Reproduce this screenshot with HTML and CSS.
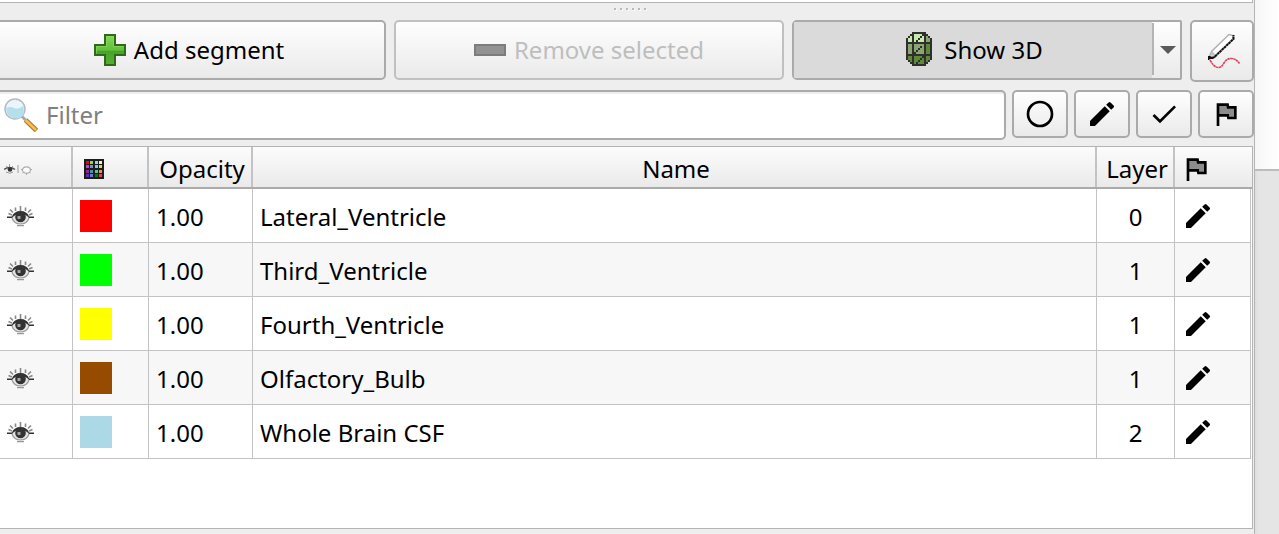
FILE: index.html
```html
<!DOCTYPE html>
<html lang="en">
<head>
    <meta charset="UTF-8" />
    <meta name="viewport" content="width=device-width, initial-scale=1.0"/>
    <title>Segment Editor</title>
    <link rel="stylesheet" href="styles.css">
</head>
<body>

    <!-- Shared icons -->
    <svg class="sprite">
        <symbol id="pencil" viewBox="0 0 24 24">
            <path d="M3 17.25V21h3.75L17.81 9.94l-3.75-3.75L3 17.25zM20.71 7.04a1 1 0 0 0 0-1.41l-2.34-2.34a1 1 0 0 0-1.41 0l-1.83 1.83 3.75 3.75 1.83-1.83z"/>
        </symbol>
        <symbol id="flag" viewBox="0 0 24 24">
            <path fill="#8c8c8c" d="M6 5h7.2l.4 2H19v8h-4l-.4-2H6z"/>
            <path d="M12.36 6l.4 2H18v6h-3.36l-.4-2H7V6h5.36M14 4H5v17h2v-7h5.6l.4 2h7V6h-5.6L14 4z"/>
        </symbol>
        <symbol id="eye" viewBox="0 0 32 32">
            <path fill="none" stroke="#888" stroke-width="1.600" d="M16.500 6v5M11.500 7.500v3.500M21.500 7.500v3.500M6 9.500l3 3M27 9.500l-3 3M4.500 13.500l3.500 1.500M28.500 13.500l-3.500 1.500"/>
            <path fill="#e6e6e6" d="M8 17q8-8 17 0-1 6.500-8.500 7Q9 23.500 8 17z"/>
            <path fill="none" stroke="#999" stroke-width="1.200" d="M8 18q2 6 8.500 6T25 18M13 25.600h7"/>
            <path fill="#333" d="M3 16.500h5q2-5.500 8.500-5.500t8.500 5.500h5v1.500h-5q-3-4-8.500-4T8 18H3z"/>
            <circle cx="16.500" cy="17" r="5.300" fill="#333"/>
            <path fill="#a5a5a5" d="M13.500 16h3v3h-3z"/>
        </symbol>
    </svg>

    <div class="panel">
        <div class="view-edge"></div>

        <!-- Splitter handle -->
        <div class="splitter"><i></i><i></i><i></i><i></i><i></i><i></i></div>

        <!-- Segment actions -->
        <div class="actions">
            <button class="btn add">
                <svg class="icon" viewBox="0 0 32 32">
                    <defs>
                        <linearGradient id="green" x2="0" y2="1">
                            <stop offset="0" stop-color="#83d85a"/>
                            <stop offset=".5" stop-color="#62c03a"/>
                            <stop offset=".55" stop-color="#48a428"/>
                            <stop offset="1" stop-color="#55b035"/>
                        </linearGradient>
                    </defs>
                    <path fill="url(#green)" stroke="#2f6a1a" stroke-width="2" d="M11 1h10v10h10v10H21v10H11V21H1V11h10z"/>
                    <path fill="none" stroke="#8fdc68" stroke-opacity=".6" d="M12.500 12.500V2.500h7v10h10M2.500 19.500v-7h10"/>
                </svg>
                Add segment
            </button>
            <button class="btn remove" disabled>
                <svg class="icon" viewBox="0 0 32 32">
                    <path fill="#929292" stroke="#7c7c7c" stroke-width="2" d="M1 11h30v10H1z"/>
                </svg>
                Remove selected
            </button>
            <div class="btn show3d">
                <button class="show3d-main">
                    <svg class="icon-3d" viewBox="0 0 13 17" shape-rendering="crispEdges">
                        <path fill="#8aa571" d="M1 3h1V2h1V1h7v1h1v1h1v3H1zM1 6h11v5H1z"/>
                        <path fill="#c9e8ae" d="M1 3h1V2h1V1h6v4H1z"/>
                        <path fill="#5e8a38" d="M10 6h2v5h-2zM1 12h11v2h-1v1h-1v1H3v-1H2v-1H1z"/>
                        <path fill="#2f2f2f" d="M3 0h7v1H3zM2 1h2v1H2zM1 2h1v1H1zM9 1h2v1H9zM11 2h1v1h-1zM0 3h1v11H0zM12 3h1v11h-1zM1 14h1v1H1zM2 15h2v1H2zM11 14h1v1h-1zM9 15h2v1H9zM3 16h7v1H3zM3 1h1v15H3zM9 1h1v15H9zM0 5h13v1H0zM0 11h13v1H0z"/>
                        <path fill="#2f2f2f" d="M5 4h1v1H5zM6 3h1v1H6zM7 2h1v1H7zM8 1h1v1H8zM4 10h1v1H4zM5 9h1v1H5zM6 8h1v1H6zM7 7h1v1H7zM5 15h1v1H5zM6 14h1v1H6zM7 13h1v1H7zM8 12h1v1H8z"/>
                    </svg>
                    Show 3D
                </button>
                <button class="show3d-menu"><span class="arrow"></span></button>
            </div>
            <button class="btn draw">
                <svg class="icon" viewBox="0 0 32 32">
                    <path fill="#fff" stroke="#b0b0b0" stroke-width="1.500" d="M3 22l3-6L23-.500l4 1V4L10 20l-6 3z"/>
                    <path fill="#c4c4c4" d="M4 21l2.500-5 3 4z"/>
                    <path fill="none" stroke="#111" stroke-width="2" stroke-dasharray="2.600 .5" d="M9 21.500L27.500 4V0"/>
                    <path fill="#111" d="M2 21h2l2 1 3-1 1 1-3 2H4l-1 1H2z"/>
                    <path fill="none" stroke="#d94560" stroke-width="1.600" stroke-dasharray="2.600 .4" d="M4 25q4 7.500 8.500 7.500 3 0 5.500-4.500t7-4.500q5 0 8.500 5"/>
                </svg>
            </button>
        </div>

        <!-- Filter row -->
        <div class="filters">
            <div class="search">
                <svg class="search-icon" viewBox="0 0 34 34">
                    <circle cx="11" cy="11" r="10" fill="#eaf6fb" stroke="#b4bcc0" stroke-width="1.500"/>
                    <path fill="#b4e0ed" d="M2 10q4-2 8 0t9-2q3 11-5 12.500Q3 21 2 10z"/>
                    <path stroke="#a8a8a8" stroke-width="3" d="M18 18.500l4 4"/>
                    <path stroke="#b87a20" stroke-width="5" d="M21.500 22l11 10.500"/>
                    <path stroke="#f6bd57" stroke-width="2.600" d="M21.500 22l10.500 10"/>
                </svg>
                <span>Filter</span>
            </div>
            <button class="btn toggle">
                <svg class="icon" viewBox="0 0 24 24"><circle cx="12" cy="12" r="9" fill="none" stroke="#000" stroke-width="2"/></svg>
            </button>
            <button class="btn toggle"><svg class="icon"><use href="#pencil"/></svg></button>
            <button class="btn toggle">
                <svg class="icon" viewBox="0 0 24 24"><path d="M9 16.170L4.830 12l-1.420 1.410L9 19 21 7l-1.410-1.410z"/></svg>
            </button>
            <button class="btn toggle"><svg class="icon"><use href="#flag"/></svg></button>
        </div>

        <!-- Segments table -->
        <div class="table">
            <div class="row header">
                <div class="cell">
                    <svg class="eyes" viewBox="0 0 28 14">
                        <path fill="none" stroke="#777" d="M2 4l2 1.500M5.500 2v3M9 4L7.500 5.500M2 10q4 2.500 7 0M14 3v8" stroke-opacity=".7"/>
                        <path fill="none" stroke="#555" stroke-width="1.500" d="M0 7.500q5.500-4 11 0"/>
                        <circle cx="6" cy="7.500" r="2.300" fill="#333"/>
                        <ellipse cx="22.500" cy="8" rx="4" ry="3.200" fill="#fff" stroke="#aaa" stroke-width="1.200"/>
                        <path stroke="#aaa" d="M17 7.500h2M26 7.500h2M18.500 11l2-1M26.500 11l-2-1M22.500 11v2"/>
                    </svg>
                </div>
                <div class="cell">
                    <svg class="palette" viewBox="0 0 20 20" shape-rendering="crispEdges">
                        <path fill="#1c1c1c" d="M0 0h20v20H0z"/>
                        <path fill="#f00" d="M2 2h3v3H2z"/><path fill="#7be05c" d="M6 2h3v3H6z"/><path fill="#9ad0e0" d="M11 2h3v3h-3z"/><path fill="#fff2a0" d="M15 2h3v3h-3z"/>
                        <path fill="#c045c8" d="M2 6h3v3H2z"/><path fill="#8090b8" d="M6 6h3v3H6z"/><path fill="#70dcd0" d="M11 6h3v3h-3z"/><path fill="#e4d060" d="M15 6h3v3h-3z"/>
                        <path fill="#902890" d="M2 11h3v3H2z"/><path fill="#4890a0" d="M6 11h3v3H6z"/><path fill="#60c0a0" d="M11 11h3v3h-3z"/><path fill="#f08868" d="M15 11h3v3h-3z"/>
                        <path fill="#6030a0" d="M2 15h3v3H2z"/><path fill="#6080c8" d="M6 15h3v3H6z"/><path fill="#008000" d="M11 15h3v3h-3z"/><path fill="#e04060" d="M15 15h3v3h-3z"/>
                    </svg>
                </div>
                <div class="cell">Opacity</div>
                <div class="cell">Name</div>
                <div class="cell">Layer</div>
                <div class="cell"><svg class="icon"><use href="#flag"/></svg></div>
            </div>
            <div class="row">
                <div class="cell"><svg class="icon"><use href="#eye"/></svg></div>
                <div class="cell"><span class="swatch red"></span></div>
                <div class="cell">1.00</div>
                <div class="cell">Lateral_Ventricle</div>
                <div class="cell layer">0</div>
                <div class="cell"><svg class="icon"><use href="#pencil"/></svg></div>
            </div>
            <div class="row">
                <div class="cell"><svg class="icon"><use href="#eye"/></svg></div>
                <div class="cell"><span class="swatch green"></span></div>
                <div class="cell">1.00</div>
                <div class="cell">Third_Ventricle</div>
                <div class="cell layer">1</div>
                <div class="cell"><svg class="icon"><use href="#pencil"/></svg></div>
            </div>
            <div class="row">
                <div class="cell"><svg class="icon"><use href="#eye"/></svg></div>
                <div class="cell"><span class="swatch yellow"></span></div>
                <div class="cell">1.00</div>
                <div class="cell">Fourth_Ventricle</div>
                <div class="cell layer">1</div>
                <div class="cell"><svg class="icon"><use href="#pencil"/></svg></div>
            </div>
            <div class="row">
                <div class="cell"><svg class="icon"><use href="#eye"/></svg></div>
                <div class="cell"><span class="swatch brown"></span></div>
                <div class="cell">1.00</div>
                <div class="cell">Olfactory_Bulb</div>
                <div class="cell layer">1</div>
                <div class="cell"><svg class="icon"><use href="#pencil"/></svg></div>
            </div>
            <div class="row">
                <div class="cell"><svg class="icon"><use href="#eye"/></svg></div>
                <div class="cell"><span class="swatch blue"></span></div>
                <div class="cell">1.00</div>
                <div class="cell">Whole Brain CSF</div>
                <div class="cell layer">2</div>
                <div class="cell"><svg class="icon"><use href="#pencil"/></svg></div>
            </div>
        </div>
    </div>

    <!-- Panel scrollbar -->
    <div class="scrollbar"><div class="thumb"></div></div>

</body>
</html>
```
FILE: styles.css
```css
:root {
    --bg: #eeeeee; /* Window background */
    --border: #aaaaaa; /* Button and input borders */
    --line: #c3c3c3; /* Table grid lines */
}

* {
    box-sizing: border-box;
}

body {
    margin: 0;
    height: 534px;
    display: flex;
    overflow: hidden;
    background: var(--bg);
    color: #000;
    font: 24px/32px "Noto Sans", sans-serif;
}

button {
    font: inherit;
    color: inherit;
    margin: 0;
    padding: 0;
    border: none;
    background: none;
}

.sprite {
    display: none;
}

.icon {
    display: block;
    flex: none;
    width: 32px;
    height: 32px;
}

.panel {
    width: 1254px;
    display: flex;
    flex-direction: column;
}

/* Bottom edge of the view above the splitter */
.view-edge {
    width: 1253px;
    height: 3px;
    background: #fff;
    border: solid #b4b4b4;
    border-width: 0 1px 1px 0;
}

.splitter {
    height: 17px;
    display: flex;
    gap: 4px;
    padding: 5px 0 0 614px;
}

.splitter i {
    width: 2px;
    height: 2px;
    background: #b9b9b9;
    box-shadow: 1px 1px 0 #fafafa;
}

/* Buttons */
.btn {
    display: flex;
    align-items: center;
    justify-content: center;
    border: 2px solid var(--border);
    border-radius: 5px;
    background: linear-gradient(#fefefe, #eaeaea);
}

.actions {
    display: flex;
    height: 70px;
    align-items: flex-start;
}

.add,
.remove,
.show3d {
    height: 60px;
    gap: 8px;
}

/* Runs past the left edge of the window */
.add {
    width: 394px;
    margin-left: -8px;
}

.remove {
    width: 390px;
    margin-left: 8px;
    color: #bebebe;
    border-color: #c0c0c0;
}

.show3d {
    width: 390px;
    margin-left: 8px;
    gap: 0;
    align-items: stretch;
    border-radius: 5px 2px 2px 5px;
}

.show3d-main {
    flex: 1;
    display: flex;
    align-items: center;
    justify-content: center;
    gap: 12px;
    padding-left: 3px;
    background: #dadada;
}

.icon-3d {
    width: 26px;
    height: 34px;
    margin-bottom: 2px;
}

.show3d-menu {
    width: 28px;
    margin: 1px 0 3px;
    border-left: 2px solid #b4b4b4;
    background: linear-gradient(#fefefe, #ebebeb);
    display: flex;
    align-items: center;
    justify-content: center;
}

.arrow {
    border: 8px solid transparent;
    border-top-color: #5a5a5a;
    border-bottom: 0;
    margin: 1px 0 0 1px;
}

.draw {
    width: 64px;
    height: 62px;
    margin-left: 8px;
}

.draw .icon {
    overflow: visible;
}

/* Filter row */
.filters {
    display: flex;
    align-items: flex-start;
    gap: 6px;
    height: 56px;
}

.search {
    width: 1014px;
    height: 50px;
    margin-left: -8px;
    padding-left: 10px;
    display: flex;
    align-items: center;
    gap: 8px;
    background: #fff;
    border: 2px solid var(--border);
    border-radius: 5px;
    box-shadow: inset 0 2px 0 #eeeeee;
    color: #808080;
}

.search-icon {
    width: 34px;
    height: 34px;
}

.toggle {
    width: 56px;
    height: 48px;
}

/* Segments table */
.table {
    width: 1253px;
    height: 383px;
    background: #fff;
    border: solid #b4b4b4;
    border-width: 1px 1px 1px 0;
}

.row {
    width: 1251px;
    height: 54px;
    display: grid;
    grid-template-columns: 73px 76px 104px 844px 78px 76px;
    border-bottom: 1px solid var(--line);
}

.row:nth-child(odd) {
    background: #f7f7f7;
}

.cell {
    display: flex;
    align-items: center;
    padding-left: 7px;
    border-right: 1px solid var(--line);
}

.cell:first-child {
    padding-left: 4px;
}

.cell.layer {
    justify-content: center;
    padding-left: 0;
}

.row:not(.header) .cell {
    padding-top: 2px;
}

.row:not(.header) .icon {
    margin-bottom: 2px;
}

.header.row {
    width: 1252px;
    height: 42px;
    background: linear-gradient(#fcfcfc, #eaeaea);
    border-bottom: 2px solid var(--border);
}

.header .cell {
    justify-content: center;
    padding-left: 4px;
    padding-top: 3px;
    border-right-width: 2px;
}

.header .cell:first-child,
.header .cell:last-child {
    justify-content: flex-start;
}

.header .cell:nth-child(2) {
    justify-content: flex-start;
    padding-left: 11px;
}

.header .cell:last-child {
    border-right: none;
    padding-left: 5px;
}

.eyes {
    width: 28px;
    height: 14px;
}

.palette {
    width: 20px;
    height: 20px;
}

.swatch {
    width: 32px;
    height: 32px;
    margin-bottom: 2px;
}

.red { background: #ff0000; }
.green { background: #00ff00; }
.yellow { background: #ffff00; }
.brown { background: #964b00; }
.blue { background: #add8e6; }

/* Scrollbar */
.scrollbar {
    flex: 1;
    border-left: 1px solid #b4b4b4;
    background: linear-gradient(to right, #dcdcdc, #e5e5e5 3px);
}

.thumb {
    height: 171px;
    background: linear-gradient(to right, #f6f6f6, #ffffff);
    border-bottom: 2px solid #bcbcbc;
}
```
